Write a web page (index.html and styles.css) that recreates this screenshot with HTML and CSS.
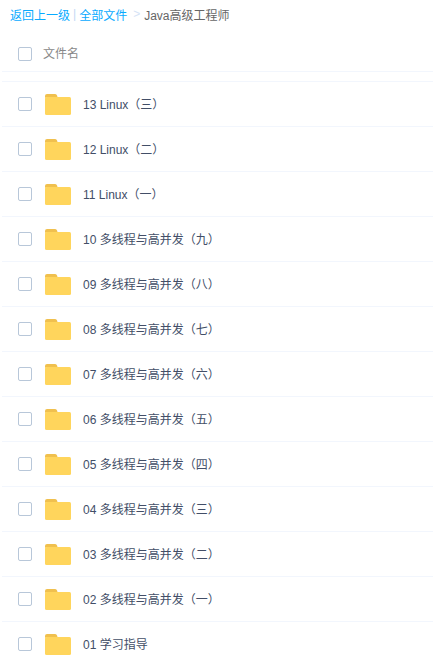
FILE: index.html
```html
<!DOCTYPE html>
<html lang="zh-CN">
<head>
    <meta charset="UTF-8">
    <meta name="viewport" content="width=device-width, initial-scale=1.0">
    <title>Java高级工程师</title>
    <link rel="stylesheet" href="styles.css">
</head>
<body>
    <svg class="svgDefs" width="0" height="0">
        <symbol id="folder" viewBox="0 0 26 22">
            <path d="M0 2Q0 0 2 0H10Q12 0 12.500 3H2Q0 3 0 5Z" fill="#f0c04e"/>
            <rect y="3" width="26" height="18" rx="1.500" fill="#ffd55c"/>
        </symbol>
    </svg>

    <div class="crumbs">
        <a class="crumbLink">返回上一级</a>
        <span class="crumbBar">|</span>
        <a class="crumbLink">全部文件</a>
        <span class="crumbArrow">&gt;</span>
        <span class="crumbNow">Java高级工程师</span>
    </div>

    <div class="listHead">
        <span class="check"></span>
        <span class="headName">文件名</span>
    </div>

    <ul class="fileList">
        <li class="fileRow"><span class="check"></span><svg class="folder"><use href="#folder"/></svg><span class="fileName">13 Linux（三）</span></li>
        <li class="fileRow"><span class="check"></span><svg class="folder"><use href="#folder"/></svg><span class="fileName">12 Linux（二）</span></li>
        <li class="fileRow"><span class="check"></span><svg class="folder"><use href="#folder"/></svg><span class="fileName">11 Linux（一）</span></li>
        <li class="fileRow"><span class="check"></span><svg class="folder"><use href="#folder"/></svg><span class="fileName">10 多线程与高并发（九）</span></li>
        <li class="fileRow"><span class="check"></span><svg class="folder"><use href="#folder"/></svg><span class="fileName">09 多线程与高并发（八）</span></li>
        <li class="fileRow"><span class="check"></span><svg class="folder"><use href="#folder"/></svg><span class="fileName">08 多线程与高并发（七）</span></li>
        <li class="fileRow"><span class="check"></span><svg class="folder"><use href="#folder"/></svg><span class="fileName">07 多线程与高并发（六）</span></li>
        <li class="fileRow"><span class="check"></span><svg class="folder"><use href="#folder"/></svg><span class="fileName">06 多线程与高并发（五）</span></li>
        <li class="fileRow"><span class="check"></span><svg class="folder"><use href="#folder"/></svg><span class="fileName">05 多线程与高并发（四）</span></li>
        <li class="fileRow"><span class="check"></span><svg class="folder"><use href="#folder"/></svg><span class="fileName">04 多线程与高并发（三）</span></li>
        <li class="fileRow"><span class="check"></span><svg class="folder"><use href="#folder"/></svg><span class="fileName">03 多线程与高并发（二）</span></li>
        <li class="fileRow"><span class="check"></span><svg class="folder"><use href="#folder"/></svg><span class="fileName">02 多线程与高并发（一）</span></li>
        <li class="fileRow"><span class="check"></span><svg class="folder"><use href="#folder"/></svg><span class="fileName">01 学习指导</span></li>
    </ul>
</body>
</html>
```

FILE: styles.css
```css
html, body {
    margin: 0;
    padding: 0;
    height: 100%;
    overflow: hidden;
}

body {
    background: #fff;
    font-family: "Liberation Sans", "Noto Sans CJK SC", sans-serif;
    font-size: 12px;
    color: #424e67;
}

.svgDefs {
    display: block;
}

.crumbs {
    display: flex;
    align-items: center;
    height: 28px;
    padding: 0 0 2px 10px;
    gap: 3px;
}

.crumbLink {
    color: #09aaff;
}

.crumbBar {
    color: #c4d8f4;
}

.crumbArrow {
    margin: 0 1px 0 3px;
    color: #d5e3f6;
}

.crumbNow {
    color: #666;
}

.listHead {
    display: flex;
    align-items: center;
    height: 34px;
    margin: 0 0 9px 2px;
    padding: 7px 0 0 16px;
    border-bottom: 1px solid #f2f6fd;
    color: #888;
}

.headName {
    margin: 0 0 4px 11px;
}

.fileList {
    list-style: none;
    margin: 0 0 0 2px;
    padding: 0;
    border-top: 1px solid #f2f6fd;
}

.fileRow {
    display: flex;
    align-items: center;
    height: 44px;
    padding-left: 16px;
    border-bottom: 1px solid #f2f6fd;
}

.fileRow:last-child {
    border-bottom: none;
}

.check {
    box-sizing: border-box;
    flex: none;
    width: 14px;
    height: 14px;
    border: 1px solid #b8c7d9;
    border-radius: 2px;
}

.folder {
    flex: none;
    width: 26px;
    height: 22px;
    margin: 2px 12px 0 13px;
}

.fileName {
    margin-bottom: 2px;
}
```
